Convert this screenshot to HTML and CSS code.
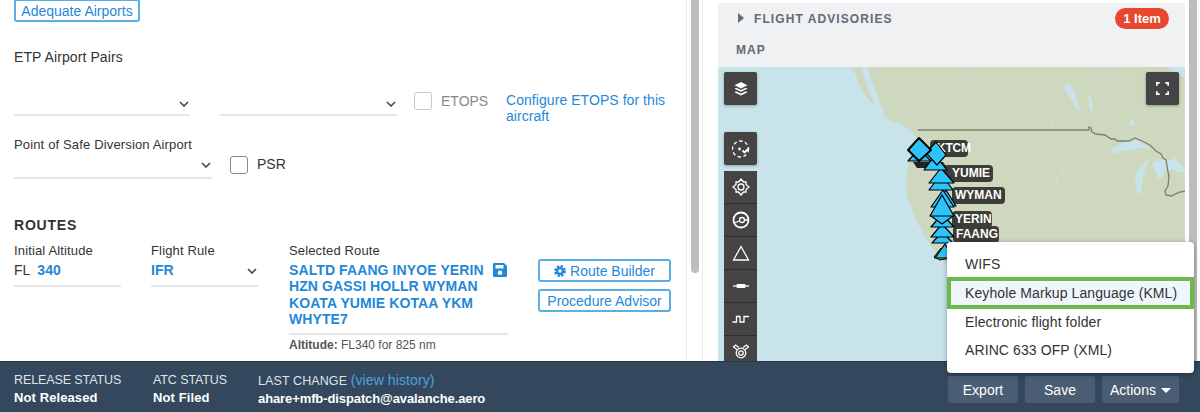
FILE: index.html
```html
<!DOCTYPE html>
<html lang="en">
<head>
<meta charset="utf-8">
<title>Flight release</title>
<link rel="stylesheet" href="styles.css">
</head>
<body>
<div class="app">
  <main class="main">
    <section class="left">
      <button class="btn-outline btn-adequate">Adequate Airports</button>
      <div class="label etp-label">ETP Airport Pairs</div>
      <div class="etp-row">
        <div class="select select-etp"><svg class="chev" viewBox="0 0 10 6"><path d="M1 1l4 4 4-4"/></svg></div>
        <div class="select select-etp"><svg class="chev" viewBox="0 0 10 6"><path d="M1 1l4 4 4-4"/></svg></div>
        <span class="check check-etops"></span>
        <span class="etops-text">ETOPS</span>
        <a class="etops-link">Configure ETOPS for this aircraft</a>
      </div>
      <div class="small-label psd-label">Point of Safe Diversion Airport</div>
      <div class="psd-row">
        <div class="select select-psd"><svg class="chev" viewBox="0 0 10 6"><path d="M1 1l4 4 4-4"/></svg></div>
        <span class="check check-psr"></span>
        <span class="psr-text">PSR</span>
      </div>
      <h2 class="routes-title">ROUTES</h2>
      <div class="routes">
        <div class="col col-alt">
          <div class="small-label">Initial Altitude</div>
          <div class="field"><span class="fl">FL</span><span class="val">340</span></div>
        </div>
        <div class="col col-rule">
          <div class="small-label">Flight Rule</div>
          <div class="field"><span class="val">IFR</span><svg class="chev chev-rule" viewBox="0 0 10 6"><path d="M1 1l4 4 4-4"/></svg></div>
        </div>
        <div class="col col-route">
          <div class="small-label">Selected Route</div>
          <div class="route-value">
            <span class="route-text">SALTD FAANG INYOE YERIN HZN GASSI HOLLR WYMAN KOATA YUMIE KOTAA YKM WHYTE7</span>
            <svg class="save-ico" viewBox="0 0 16 16"><path fill-rule="evenodd" d="M2 1h10l3 3v10a1 1 0 0 1-1 1H2a1 1 0 0 1-1-1V2a1 1 0 0 1 1-1zm1.500 2v3.500h8V3zM8 8.500a2.300 2.300 0 1 0 0 4.600 2.300 2.300 0 0 0 0-4.600z"/></svg>
          </div>
          <div class="altitude"><b>Altitude:</b> FL340 for 825 nm</div>
        </div>
        <div class="col col-btns">
          <button class="btn-outline btn-route"><svg class="gear" viewBox="0 0 16 16"><circle cx="8" cy="8" r="6.400" class="gear-teeth"/><circle cx="8" cy="8" r="4" class="gear-ring"/></svg>Route Builder</button>
          <button class="btn-outline btn-route">Procedure Advisor</button>
        </div>
      </div>
    </section>
    <div class="scroll scroll-left"><div class="thumb thumb-left"></div></div>
    <section class="right">
      <div class="panel">
        <div class="adv-row">
          <span class="caret"></span>
          <span class="adv-title">FLIGHT ADVISORIES</span>
          <span class="badge">1 Item</span>
        </div>
        <div class="map-title">MAP</div>
      </div>
      <div class="map">
        <svg class="map-base" viewBox="718 67 467 294">
          <path class="land" d="M868 67L871 80 876 92 880 104 888 115 900 124 912 132 917 140 912 150 908 165 906 180 907 195 912 210 918 224 926 238 934 250 943 260 955 275 970 361 1185 361 1185 67z"/>
          <path class="land" d="M852 68l10 0 3 12 5 14 6 12-9-8-7-12-4-10zM883 110l8 6 8 8-9-3-6-5z"/>
          <path class="water" d="M1065 83l6 2 4 8 3 10 3 9-5-4-5-9-6-9zM1088 95l3 3 2 10-1 5-3-8zM1129 119l5 1 1 5-5 1zM1168 67h17v10l-9-3z"/>
          <path class="water" d="M1110 150l14-8 12-2 9 4 6 6-9-2-10 2-10 1-8 3zM1137 170l6-4 3-5 5-3-5 8-3 12-2 14-4 2-2-14zM1152 164l8-5 8 2 7-3 5 6 5 4v5l-12-3-7 0-3 7-4 2z"/>
          <path class="river" d="M900 95l8 8 6 8M1050 120l3 8M1060 165l3 10M1055 175l4 12M1100 75l6 6M1020 85l8 6M960 75l10 5M1145 100l8 6M1040 90l6 8M1110 95l7 10"/>
          <path class="border" d="M918 130H1089l0-3 2 1 1 4 4 2 9 1 6 4 4 0 2 2 12 0 6-3 7 3 8 4 6 6 5 3 2 4 3 2 1 6 1 6 1 4-1 10-3 5 1 4 5 1 9-4 6-1 5-2"/>
        </svg>
        <div class="pin-label pin-ktcm">KTCM</div>
        <div class="pin-label pin-yumie">YUMIE</div>
        <div class="pin-label pin-wyman">WYMAN</div>
        <div class="pin-label pin-yerin">YERIN</div>
        <div class="pin-label pin-faang">FAANG</div>
        <svg class="map-pins" viewBox="718 67 467 294">
          <path class="shadow" d="M913 162h30l4 6h-30z"/>
          <path class="orange" d="M941 248l9 10-10 2-6-3z"/>
          <path class="pin" d="M945 244l8 14h-18z"/>
          <path class="pin" d="M942 232l11 11h-21z"/>
          <path class="pin" d="M942 224l12 13h-23z"/>
          <path class="pin" d="M942 214l12 13h-23z"/>
          <path class="pin" d="M942 205l11 11-11 8-11-8z"/>
          <path class="pin" d="M946 190l10 16h-21z"/>
          <path class="pin" d="M943 190l11 17h-23z"/>
          <path class="pin" d="M942 195l12 21h-24z"/>
          <path class="pin" d="M941 174l12 16h-24z"/>
          <path class="pin" d="M941 168l13 15h-25z"/>
          <path class="pin" d="M935 155l12 15h-23z"/>
          <path class="pin" d="M919 149l12 12h-23z"/>
          <path class="pin" d="M936 142l10 13-9 10-11-12z"/>
          <path class="pin pin-bold" d="M919 138l12 12-12 11-11-11z"/>
        </svg>
        <div class="tools tools-left">
          <button class="tool tool-layers">
            <svg viewBox="0 0 16 16"><path class="ico-fill" d="M8 1l6.500 3.200L8 7.400 1.500 4.200zM3 6.700l5 2.400 5-2.400 1.500 1L8 10.800 1.500 7.700zM3 10.200l5 2.400 5-2.400 1.500 1L8 14.500 1.500 11.200z"/></svg>
          </button>
          <button class="tool tool-select">
            <svg viewBox="0 0 18 18"><circle class="ico-dash" cx="8.500" cy="9" r="8"/><circle class="ico-fill" cx="7.500" cy="9" r="1.400"/><path class="ico-line ico-thick" d="M10.500 10.500l2 2 4.500-4.500"/></svg>
          </button>
          <div class="tool-group">
            <button class="tool"><svg viewBox="0 0 18 18"><path class="ico-line" d="M9 1l2.500 3h2.500v2.500L17 9l-3 2.500V14h-2.500L9 17l-2.500-3H4v-2.500L1 9l3-2.500V4h2.500z"/><circle class="ico-line" cx="9" cy="9" r="3"/></svg></button>
            <button class="tool"><svg viewBox="0 0 18 18"><circle class="ico-line ico-thick" cx="9" cy="9" r="7.500"/><circle class="ico-line" cx="10" cy="9" r="2.500"/><path class="ico-line" d="M2 12l5.500-2M12.500 9H16"/></svg></button>
            <button class="tool"><svg viewBox="0 0 18 18"><path class="ico-line" d="M9 2.500L16.500 16h-15z"/></svg></button>
            <button class="tool"><svg viewBox="0 0 18 18"><path class="ico-line" d="M1 9h16"/><rect class="ico-fill" x="4.500" y="7" width="9" height="4" rx="1"/></svg></button>
            <button class="tool"><svg viewBox="0 0 18 18"><path class="ico-line" d="M0.500 12h4V6.500h3.500V12h4V6.500h5"/></svg></button>
            <button class="tool"><svg viewBox="0 0 18 18"><circle class="ico-line" cx="9" cy="10" r="2.200"/><circle class="ico-line" cx="9" cy="10" r="4.800"/><path class="ico-line" d="M5 6.500L1.500 4l2-2L7 4.500M13 6.500L16.500 4l-2-2L11 4.500"/></svg></button>
          </div>
        </div>
        <button class="tool tool-full">
          <svg viewBox="0 0 16 16"><path class="ico-line ico-thick" d="M2 5V2h3M11 2h3v3M14 11v3h-3M5 14H2v-3"/></svg>
        </button>
      </div>
    </section>
    <div class="scroll scroll-right"><div class="thumb thumb-right"></div></div>
  </main>
  <footer class="footer">
    <div class="status status-release">
      <div class="status-label">RELEASE STATUS</div>
      <div class="status-value">Not Released</div>
    </div>
    <div class="status status-atc">
      <div class="status-label">ATC STATUS</div>
      <div class="status-value">Not Filed</div>
    </div>
    <div class="status">
      <div class="status-label status-change">LAST CHANGE <a class="history">(view history)</a></div>
      <div class="status-value status-email">ahare+mfb-dispatch@avalanche.aero</div>
    </div>
    <div class="footer-btns">
      <button class="btn-foot btn-export">Export</button>
      <button class="btn-foot btn-save">Save</button>
      <button class="btn-foot btn-actions">Actions<span class="foot-caret"></span></button>
    </div>
  </footer>
  <div class="menu">
    <div class="menu-item">WIFS</div>
    <div class="menu-item menu-hl">Keyhole Markup Language (KML)</div>
    <div class="menu-item">Electronic flight folder</div>
    <div class="menu-item">ARINC 633 OFP (XML)</div>
  </div>
</div>
</body>
</html>
```

FILE: styles.css
```css
* { box-sizing: border-box; }
html, body { margin: 0; padding: 0; height: 100%; overflow: hidden; background: #fff; }
body { font-family: "Liberation Sans", Arial, sans-serif; font-size: 14px; color: #333; }
button { font-family: inherit; cursor: pointer; }

.app { position: relative; width: 1200px; height: 412px; display: flex; flex-direction: column; overflow: hidden; }
.main { display: flex; height: 361px; flex: none; overflow: hidden; }

/* left pane */
.left { width: 686px; flex: none; padding-left: 14px; }
.btn-outline { background: #fff; border: 2px solid #5aaee6; border-radius: 3px; color: #1f88d8; font-size: 14px; padding: 0; display: flex; align-items: center; justify-content: center; }
.btn-adequate { width: 126px; height: 23px; margin-top: -1px; }
.label { font-size: 14px; line-height: 16px; letter-spacing: 0.1px; }
.small-label { font-size: 13px; line-height: 16px; letter-spacing: 0.15px; }
.etp-label { margin-top: 27px; }
.etp-row { display: flex; align-items: flex-start; margin-top: 27px; height: 32px; }
.select { position: relative; border-bottom: 2px solid #e6e6e6; }
.select-etp { width: 176px; height: 24px; margin-right: 30px; }
.select-etp + .select-etp { margin-right: 17px; width: 177px; }
.chev { width: 10px; height: 6px; fill: none; stroke: #3c4b5a; stroke-width: 1.600; display: block; }
.select .chev { position: absolute; right: 1px; top: 9px; }
.check { display: block; flex: none; width: 18px; height: 18px; border-radius: 3px; background: #fff; }
.check-etops { border: 1.500px solid #c8c8c8; }
.etops-text { color: #888; margin-left: 9px; line-height: 18px; width: 65px; }
.etops-link { color: #1f88d8; line-height: 16px; width: 165px; letter-spacing: 0.06px; }
.psd-label { margin-top: 13px; }
.psd-row { display: flex; align-items: flex-start; height: 26px; }
.select-psd { width: 198px; height: 26px; margin-right: 18px; }
.check-psr { border: 1.500px solid #8a8a8a; margin-top: 3px; }
.psr-text { margin-left: 9px; line-height: 18px; margin-top: 2px; }
.routes-title { margin: 38px 0 0; font-size: 14px; line-height: 16px; font-weight: 700; letter-spacing: 0.8px; }

.routes { display: flex; align-items: flex-start; margin-top: 10px; }
.col-alt { width: 107px; margin-right: 30px; }
.col-rule { width: 107px; margin-right: 31px; }
.col-route { width: 219px; margin-right: 30px; }
.col-btns { width: 133px; margin-top: 16px; display: flex; flex-direction: column; gap: 7px; }
.field { display: flex; align-items: center; height: 25px; margin-top: 3px; border-bottom: 2px solid #e6e6e6; padding-bottom: 7px; position: relative; }
.fl { margin-right: 7px; }
.val { color: #1f88d8; font-weight: 700; font-size: 14px; }
.chev-rule { position: absolute; right: 1px; top: 6px; }
.route-value { display: flex; justify-content: space-between; align-items: flex-start; margin-top: 3px; padding-bottom: 5px; border-bottom: 2px solid #e6e6e6; }
.route-text { color: #1f88d8; font-weight: 700; font-size: 14px; line-height: 16.400px; width: 202px; letter-spacing: 0.1px; }
.save-ico { width: 16px; height: 16px; fill: #1f88d8; flex: none; }
.altitude { font-size: 12px; line-height: 16px; margin-top: 2px; color: #555; }
.btn-route { width: 133px; height: 23px; }
.gear { width: 12px; height: 12px; margin-right: 4px; }
.gear-teeth { fill: none; stroke: #1f88d8; stroke-width: 3; stroke-dasharray: 3 2.030; }
.gear-ring { fill: none; stroke: #1f88d8; stroke-width: 3.200; }

/* scrollbars */
.scroll { flex: none; background: #fff; height: 100%; }
.scroll-left { width: 17px; border-left: 1px solid #ececec; border-right: 1px solid #ececec; padding: 0 3px 0 4px; }
.scroll-right { width: 15px; padding-left: 4px; }
.thumb { width: 8px; background: #bdbdbd; border-radius: 0 0 4px 4px; }
.thumb-left { height: 273px; }
.thumb-right { height: 361px; border-radius: 0; }

/* right pane */
.right { width: 482px; flex: none; padding: 3px 0 0 15px; display: flex; flex-direction: column; }
.panel { background: #eff1f3; height: 64px; flex: none; padding: 0 16px 0 18px; }
.adv-row { display: flex; align-items: center; height: 30px; }
.caret { width: 0; height: 0; border-left: 6px solid #5f6b75; border-top: 5px solid transparent; border-bottom: 5px solid transparent; margin-left: 2px; }
.adv-title { margin-left: 10px; color: #5f6b75; font-weight: 700; font-size: 12px; line-height: 14px; padding-top: 1px; letter-spacing: 1.080px; flex: 1; }
.badge { background: #e8472f; color: #fff; font-weight: 700; font-size: 13px; border-radius: 11px; height: 21px; line-height: 21px; width: 54px; text-align: center; }
.map-title { margin-top: 9px; color: #5f6b75; font-weight: 700; font-size: 12px; line-height: 16px; letter-spacing: 1px; }

.map { position: relative; flex: 1; background: #c9e3eb; overflow: hidden; border-radius: 3px 3px 0 0; }
.map-base, .map-pins { position: absolute; left: 0; top: 0; width: 467px; height: 294px; display: block; }
.land { fill: #cdd8bf; }
.water { fill: #c9e3eb; }
.river { fill: none; stroke: #c9e3eb; stroke-width: 1; }
.border { fill: none; stroke: #7f7d6c; stroke-width: 1.300; }
.pin { fill: #2cc4fa; stroke: #000; stroke-width: 1.200; stroke-linejoin: round; }
.pin-bold { stroke-width: 2; }
.orange { fill: #f09a2a; stroke: #000; stroke-width: 1; }
.shadow { fill: #222; }

.pin-label { position: absolute; background: #3d3d38; color: #fff; font-weight: 700; font-size: 12px; line-height: 17px; height: 17px; border-radius: 4px; padding: 0 3px; white-space: nowrap; }
.pin-ktcm { left: 212px; top: 73px; width: 38px; padding-left: 7px; letter-spacing: -0.2px; }
.pin-yumie { left: 225px; top: 98px; width: 50px; padding-left: 9px; }
.pin-wyman { left: 234px; top: 120px; width: 53px; }
.pin-yerin { left: 234px; top: 144px; width: 40px; }
.pin-faang { left: 235px; top: 159px; width: 46px; }

.tools { position: absolute; left: 6px; top: 5px; display: flex; flex-direction: column; }
.tool { display: flex; align-items: center; justify-content: center; width: 33px; height: 33px; background: #444; border: 0; border-radius: 2px; padding: 0; box-shadow: 0 1px 3px rgba(0,0,0,.3); }
.tool svg { width: 18px; height: 18px; display: block; }
.tool-select { margin-top: 27px; }
.tool-group { display: flex; flex-direction: column; margin-top: 6px; }
.tool-group .tool { border-radius: 0; box-shadow: none; border-bottom: 1px solid #2f2f2f; }
.tool-full { position: absolute; right: 6px; top: 5px; }
.tool-full svg { width: 15px; height: 15px; }
.tool-layers svg { width: 16px; height: 16px; }
.ico-fill { fill: #fff; }
.ico-line { fill: none; stroke: #fff; stroke-width: 1.300; }
.ico-thick { stroke-width: 1.800; }
.ico-dash { fill: none; stroke: #fff; stroke-width: 1.300; stroke-dasharray: 3.500 2.500; }

/* footer */
.footer { flex: none; height: 51px; background: #34485d; border-top: 1px solid #25384c; display: flex; padding: 10px 21px 0 14px; color: #fff; }
.status-release { width: 139px; }
.status-atc { width: 105px; }
.status-label { font-size: 12.500px; line-height: 17px; color: #dfe4e9; letter-spacing: -0.1px; }
.status-change { letter-spacing: 0.1px; }
.status-value { font-size: 13px; font-weight: 700; line-height: 16px; margin-top: 1px; letter-spacing: 0.1px; }
.status-email { letter-spacing: -0.1px; }
.history { color: #4aa3e0; font-size: 14px; }
.footer-btns { margin-left: auto; display: flex; gap: 7px; margin-top: 4px; height: 27px; }
.btn-foot { background: #4a5d72; border: 0; border-radius: 2px; color: #fff; font-size: 14px; padding: 0; height: 27px; }
.btn-export, .btn-save { width: 70px; }
.btn-actions { width: 77px; }
.foot-caret { display: inline-block; width: 0; height: 0; border-left: 5px solid transparent; border-right: 5px solid transparent; border-top: 5px solid #fff; margin-left: 5px; vertical-align: 2px; }

/* menu */
.menu { position: absolute; left: 947px; top: 242px; width: 247px; height: 131px; background: #fff; border-radius: 4px; padding-top: 8px; box-shadow: 0 1px 5px rgba(0,0,0,.35); }
.menu-item { height: 28px; line-height: 28px; padding-left: 18px; font-size: 14px; color: #333; white-space: nowrap; letter-spacing: 0.1px; }
.menu-hl { height: 32px; line-height: 24px; margin: -1px 0; border: 4px solid #6cbb4a; background: #f0f7fc; padding-left: 14px; }
```
